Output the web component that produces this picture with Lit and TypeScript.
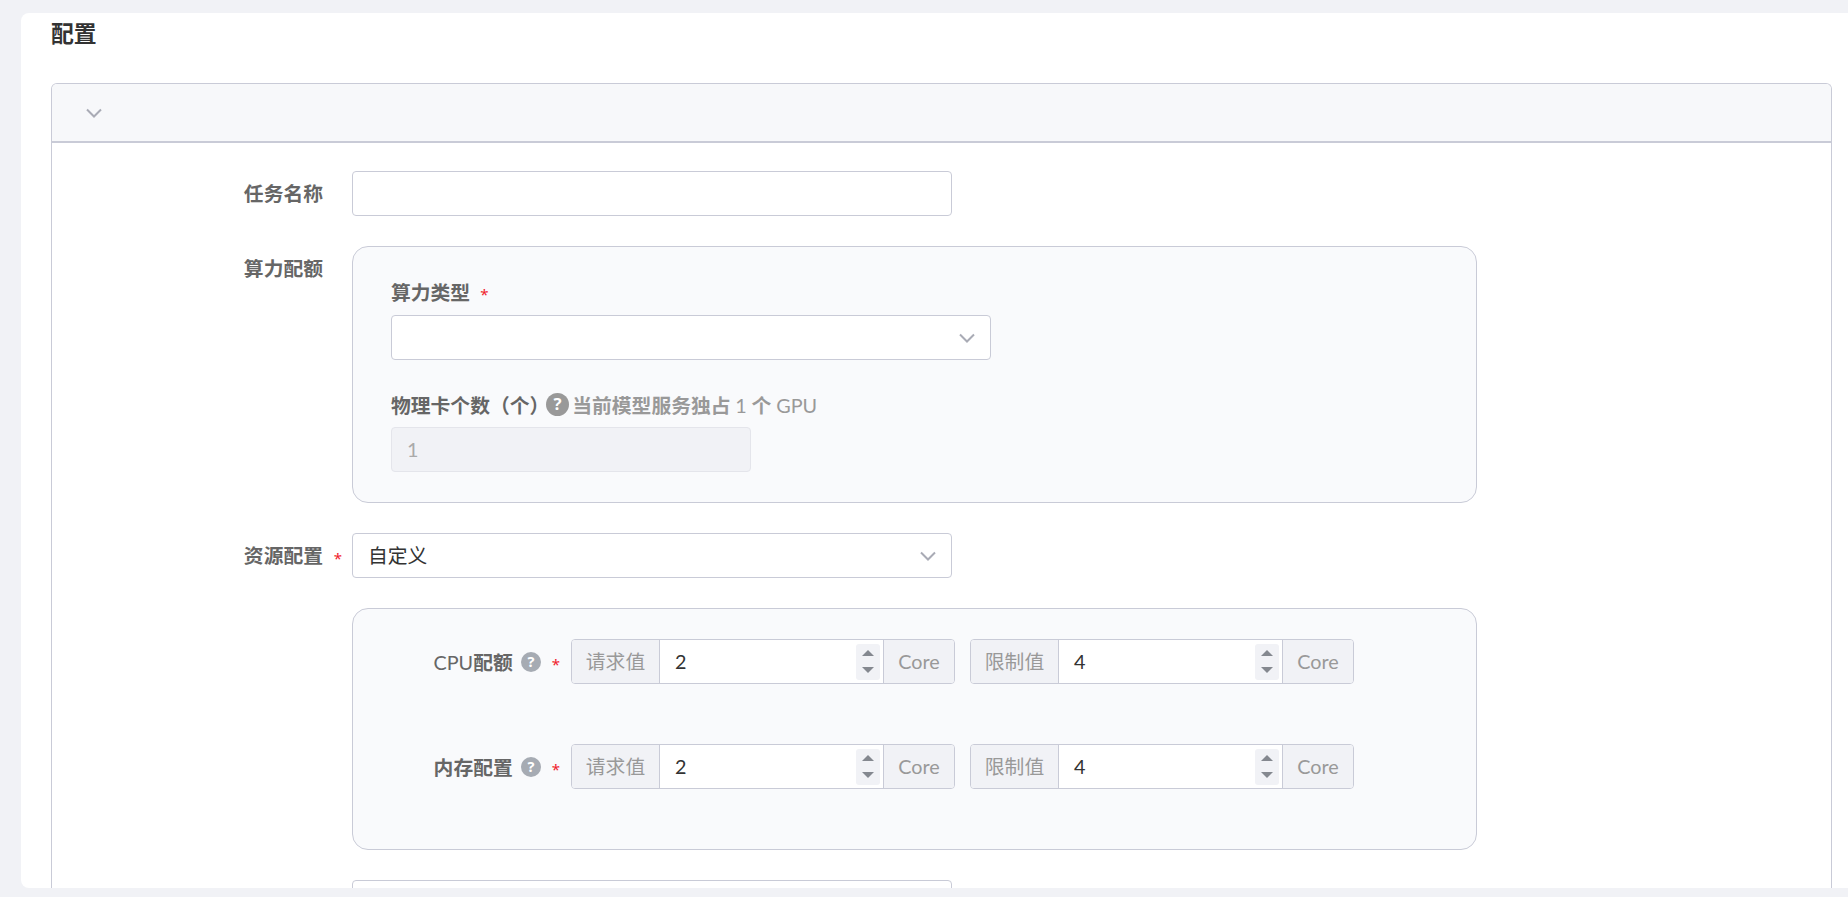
import { LitElement, html, css } from "lit";
import { customElement } from "lit/decorators.js";

const chevron = () => html`<svg width="16" height="10" viewBox="0 0 16 10" fill="none"><path d="M1 1.5 8 8.5 15 1.5" stroke="currentColor" stroke-width="2"/></svg>`;

@customElement("app-root")
export class AppRoot extends LitElement {
  static styles = css`
    :host { display: block; height: 897px; overflow: hidden; background: #f1f2f6; font-family: Lato, "Noto Sans CJK SC", sans-serif; font-size: 19.8px; color: #333; }
    * { box-sizing: border-box; }
    .card { margin: 13px 0 0 21px; height: 875px; background: #fff; border-radius: 8px 0 0 8px; padding: 0 16px 0 30px; overflow: hidden; }
    .title { margin: 0; height: 70px; padding-top: 4px; font-size: 22.8px; line-height: 32px; font-weight: 700; color: #333; }
    .box { border: 1px solid #c9cbd7; border-bottom: 0; border-radius: 6px 6px 0 0; height: 900px; }
    .head { height: 59px; background: #f7f8fa; border-bottom: 2px solid #c9cbd7; border-radius: 5px 5px 0 0; display: flex; align-items: center; padding-left: 34px; color: #a9abb5; }
    .body { padding-top: 28px; display: grid; grid-template-columns: 271px 29px 1125px; align-items: start; }
    .label { height: 45px; display: flex; align-items: center; justify-content: flex-end; font-weight: 700; color: #666; white-space: nowrap; padding-bottom: 2px; }
    .s { color: #f01c2c; font-family: "Noto Sans", sans-serif; font-size: 15px; font-weight: 400; line-height: 1; }
    .star { height: 45px; display: flex; align-items: center; justify-content: center; padding-top: 6px; padding-left: 1px; }
    .ctl { grid-column: 3; }
    .gap30 { margin-bottom: 30px; }
    .input { width: 600px; height: 45px; background: #fff; border: 1px solid #c9cbd7; border-radius: 4px; display: flex; align-items: center; justify-content: space-between; padding: 0 15px; color: #333; line-height: 1; }
    .input svg { color: #a9abb5; }
    .panel { background: #f9fafc; border: 1px solid #c9cbd7; border-radius: 16px; }
    .p1 { height: 257px; padding: 30px 38px 0; }
    .plabel { height: 30px; display: flex; align-items: center; font-weight: 700; color: #666; white-space: nowrap; margin-bottom: 8px; padding-bottom: 2px; }
    .plabel .s { margin-left: 10px; padding-top: 6px; }
    .second { margin-top: 30px; margin-bottom: 7px; }
    .q { width: 23px; height: 23px; flex: none; margin-left: -3px; }
    .hint { color: #999; margin-left: 3px; }
    .hint i { font-style: normal; font-weight: 400; }
    .dis { width: 360px; height: 45px; background: #f1f2f6; border: 1px solid #e4e5eb; border-radius: 4px; display: flex; align-items: center; padding: 0 15px 1px; color: #aaa; }
    .p2 { height: 242px; padding-top: 30px; }
    .res { display: grid; grid-template-columns: 218px 1fr; row-gap: 60px; }
    .rl { height: 45px; display: flex; align-items: center; justify-content: flex-end; padding-right: 11px; color: #666; white-space: nowrap; padding-bottom: 1px; }
    .rl b { font-weight: 700; }
    .rl .s { margin-left: 11px; padding-top: 6px; }
    .rl .q { width: 20px; height: 20px; margin: 1px 0 0 8px; }
    .groups { display: flex; gap: 15px; }
    .group { width: 384px; height: 45px; display: flex; border: 1px solid #c9cbd7; border-radius: 4px; background: #fff; overflow: hidden; }
    .add { background: #f1f2f6; color: #999; display: flex; align-items: center; justify-content: center; flex: none; padding-bottom: 2px; }
    .add.l { width: 88px; border-right: 1px solid #c9cbd7; }
    .add.r { width: 71px; border-left: 1px solid #c9cbd7; }
    .num { flex: 1; display: flex; align-items: center; justify-content: space-between; padding: 0 3px 0 15px; color: #333; }
    .num span { padding-bottom: 2px; }
    .spin { width: 24px; height: 36px; background: #f1f2f6; border-radius: 3px; display: flex; flex-direction: column; align-items: center; justify-content: center; gap: 11px; }
    .tri-u { width: 0; height: 0; border-left: 6px solid transparent; border-right: 6px solid transparent; border-bottom: 6px solid #84888f; }
    .tri-d { width: 0; height: 0; border-left: 6px solid transparent; border-right: 6px solid transparent; border-top: 6px solid #84888f; }
  `;

  private q(fill: string) {
    return html`<svg class="q" viewBox="0 0 22 22"><circle cx="11" cy="11" r="11" fill=${fill}/><text x="11" y="16.5" text-anchor="middle" font-size="16" font-weight="700" fill="#fff" font-family="Noto Sans">?</text></svg>`;
  }

  private group(name: string, val: string) {
    return html`<div class="group"><div class="add l">${name}</div><div class="num"><span>${val}</span><div class="spin"><div class="tri-u"></div><div class="tri-d"></div></div></div><div class="add r">Core</div></div>`;
  }

  private resRow(label: unknown) {
    return html`<div class="rl">${label}${this.q("#a6abb3")}<span class="s">*</span></div>
      <div class="groups">${this.group("请求值", "2")}${this.group("限制值", "4")}</div>`;
  }

  render() {
    return html`
      <div class="card">
        <h2 class="title">配置</h2>
        <div class="box">
          <div class="head">${chevron()}</div>
          <div class="body">
            <div class="label">任务名称</div>
            <div></div>
            <div class="ctl gap30"><div class="input"></div></div>

            <div class="label">算力配额</div>
            <div></div>
            <div class="ctl gap30">
              <div class="panel p1">
                <div class="plabel">算力类型<span class="s">*</span></div>
                <div class="input"><span></span>${chevron()}</div>
                <div class="plabel second">物理卡个数（个）${this.q("#999")}<span class="hint">当前模型服务独占 <i>1</i> 个 <i>GPU</i></span></div>
                <div class="dis">1</div>
              </div>
            </div>

            <div class="label">资源配置</div>
            <div class="star"><span class="s">*</span></div>
            <div class="ctl gap30"><div class="input"><span>自定义</span>${chevron()}</div></div>

            <div class="ctl gap30">
              <div class="panel p2">
                <div class="res">
                  ${this.resRow(html`<span>CPU<b>配额</b></span>`)}
                  ${this.resRow(html`<b>内存配置</b>`)}
                </div>
              </div>
            </div>

            <div class="ctl"><div class="input"></div></div>
          </div>
        </div>
      </div>
    `;
  }
}
